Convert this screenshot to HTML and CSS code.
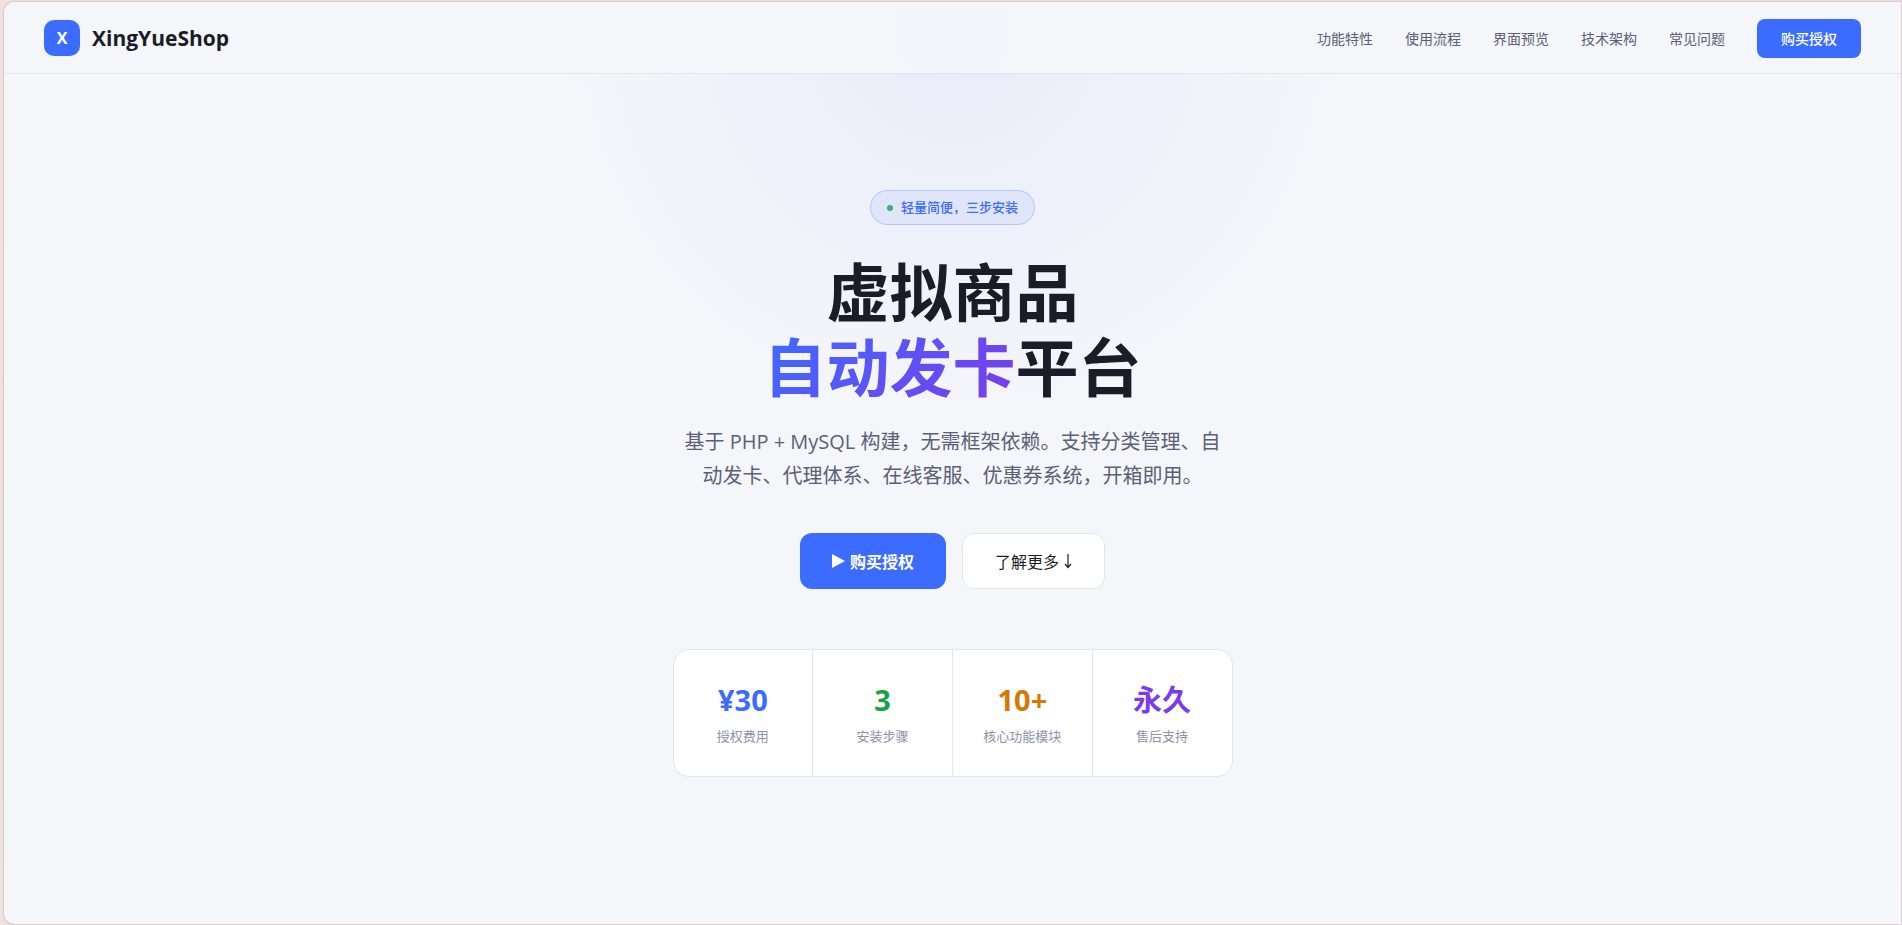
FILE: index.html
```html
<!DOCTYPE html>
<html lang="zh-CN">
<head>
    <meta charset="UTF-8">
    <meta name="viewport" content="width=device-width, initial-scale=1.0">
    <title>XingYueShop</title>
    <link rel="stylesheet" href="styles.css">
</head>
<body>
<div class="page">
    <header class="navbar">
        <a class="logo" href="#">
            <span class="logo-mark">X</span>
            <span>XingYueShop</span>
        </a>
        <nav class="nav-links">
            <a href="#features">功能特性</a>
            <a href="#steps">使用流程</a>
            <a href="#preview">界面预览</a>
            <a href="#tech">技术架构</a>
            <a href="#faq">常见问题</a>
            <a class="nav-buy" href="#buy">购买授权</a>
        </nav>
    </header>

    <main class="hero">
        <div class="badge"><span class="badge-dot"></span>轻量简便，三步安装</div>
        <h1>虚拟商品<br><span class="gradient-text">自动发卡</span>平台</h1>
        <p class="hero-desc">基于 PHP + MySQL 构建，无需框架依赖。支持分类管理、自动发卡、代理体系、在线客服、优惠券系统，开箱即用。</p>
        <div class="hero-actions">
            <a class="btn btn-primary" href="#buy">
                <svg width="13" height="16" viewBox="0 0 13 16" aria-hidden="true"><path d="M0 1v14l13-7z" fill="currentColor"/></svg>
                购买授权
            </a>
            <a class="btn btn-outline" href="#features">
                了解更多
                <svg width="8" height="16" viewBox="0 0 8 16" aria-hidden="true"><path d="M4 1v13M1 11l3 3.500 3-3.500" fill="none" stroke="currentColor" stroke-width="1.200"/></svg>
            </a>
        </div>
        <div class="stats">
            <div class="stat">
                <div class="stat-num blue">¥30</div>
                <div class="stat-label">授权费用</div>
            </div>
            <div class="stat">
                <div class="stat-num green">3</div>
                <div class="stat-label">安装步骤</div>
            </div>
            <div class="stat">
                <div class="stat-num orange">10+</div>
                <div class="stat-label">核心功能模块</div>
            </div>
            <div class="stat">
                <div class="stat-num purple">永久</div>
                <div class="stat-label">售后支持</div>
            </div>
        </div>
    </main>
</div>
</body>
</html>
```
FILE: styles.css
```css
:root {
    --bg: #f5f6fa;
    --text: #1a1d27;
    --muted: #5a6078;
    --light: #8c93a8;
    --border: #e3e5ee;
    --blue: #3b6cff;
    --purple: #7c3aed;
}

* {
    margin: 0;
    padding: 0;
    box-sizing: border-box;
}

body {
    min-height: 100vh;
    display: flex;
    padding: 2px 1px 1px 4px;
    background: linear-gradient(#f3e1e0, #eee2e2);
    color: var(--text);
    font-family: "Open Sans", "Noto Sans CJK SC", sans-serif;
}

a {
    color: inherit;
    text-decoration: none;
}

.page {
    flex: 1;
    border-radius: 10px 0 0 10px;
    background: radial-gradient(circle 396px at 50% 28px, rgba(91, 80, 240, 0.07), rgba(59, 108, 255, 0.04) 45%, transparent) var(--bg);
    box-shadow: 0 0 2px rgba(90, 80, 60, 0.5);
    overflow: hidden;
}

/* Navbar */
.navbar {
    display: flex;
    justify-content: space-between;
    align-items: center;
    height: 72px;
    padding: 1px 40px 0;
    background: rgba(245, 246, 250, 0.9);
    border-bottom: 1px solid var(--border);
}

.logo {
    display: flex;
    align-items: center;
    gap: 12px;
    font-size: 21px;
    font-weight: 700;
}

.logo-mark {
    display: flex;
    align-items: center;
    justify-content: center;
    width: 36px;
    height: 36px;
    border-radius: 10px;
    background: var(--blue);
    color: #fff;
    font-size: 16px;
}

.nav-links {
    display: flex;
    align-items: center;
    gap: 32px;
    color: var(--muted);
    font-size: 14px;
}

.nav-buy {
    padding: 0 24px;
    border-radius: 8px;
    background: var(--blue);
    color: #fff;
    font-weight: 500;
    line-height: 39px;
}

/* Hero */
.hero {
    display: flex;
    flex-direction: column;
    align-items: center;
    padding: 116px 24px 80px;
    text-align: center;
}

.badge {
    display: flex;
    align-items: center;
    gap: 8px;
    padding: 0 16px;
    border: 1px solid rgba(59, 108, 255, 0.25);
    border-radius: 18px;
    background: rgba(59, 108, 255, 0.08);
    color: var(--blue);
    font-size: 13px;
    font-weight: 500;
    line-height: 33px;
}

.badge-dot {
    width: 6px;
    height: 6px;
    border-radius: 50%;
    background: #3fb068;
}

h1 {
    margin: 29px 0 21px;
    font-size: 63px;
    font-weight: 700;
    line-height: 75px;
}

.gradient-text {
    background: linear-gradient(135deg, var(--blue), var(--purple));
    -webkit-background-clip: text;
    background-clip: text;
    color: transparent;
}

.hero-desc {
    max-width: 550px;
    margin-bottom: 40px;
    color: var(--muted);
    font-size: 20px;
    line-height: 34px;
}

.hero-actions {
    display: flex;
    gap: 16px;
    margin-bottom: 60px;
}

.btn {
    display: flex;
    align-items: center;
    gap: 5px;
    height: 56px;
    padding: 0 32px;
    border-radius: 12px;
    font-size: 16px;
}

.btn-primary {
    background: var(--blue);
    color: #fff;
    font-weight: 700;
}

.btn-outline {
    border: 1px solid var(--border);
    background: #fff;
}

/* Stats */
.stats {
    display: grid;
    grid-template-columns: repeat(4, 1fr);
    gap: 1px;
    width: 100%;
    max-width: 560px;
    border: 1px solid var(--border);
    border-radius: 16px;
    background: var(--border);
    overflow: hidden;
}

.stat {
    padding: 28px 16px 30px;
    background: #fff;
}

.stat-num {
    margin-bottom: 4px;
    font-size: 29px;
    font-weight: 700;
    line-height: 44px;
}

.stat-label {
    color: var(--light);
    font-size: 13px;
    line-height: 20px;
}

.blue {
    color: var(--blue);
}

.green {
    color: #16a34a;
}

.orange {
    color: #d97706;
}

.purple {
    color: var(--purple);
}
```
